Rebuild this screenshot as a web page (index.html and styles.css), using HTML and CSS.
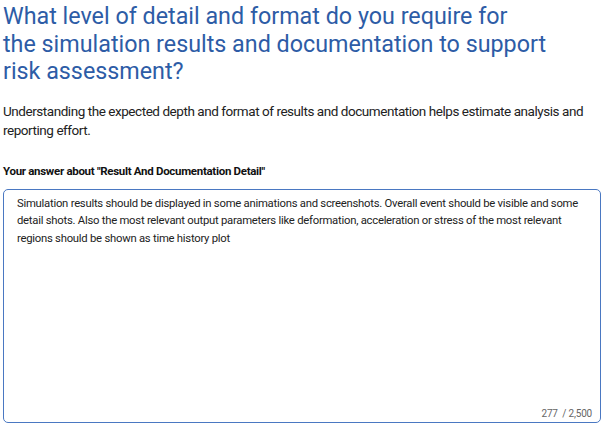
FILE: index.html
```html
<!doctype html>
<html>
<head>
<meta charset="utf-8">
<title>Result And Documentation Detail</title>
<link rel="stylesheet" href="styles.css">
</head>
<body>
<div class="question">
    <h1 class="questionTitle">What level of detail and format do you require for<br>the simulation results and documentation to support<br>risk assessment?</h1>
    <p class="questionHint">Understanding the expected depth and format of results and documentation helps estimate analysis and reporting effort.</p>
    <div class="answerLabel">Your answer about "Result And Documentation Detail"</div>
    <div class="answerBox">
        <div class="answerText">Simulation results should be displayed in some animations and screenshots. Overall event should be visible and some detail shots. Also the most relevant output parameters like deformation, acceleration or stress of the most relevant regions should be shown as time history plot</div>
        <div class="counter">277&nbsp; / 2,500</div>
    </div>
</div>
</body>
</html>
```

FILE: styles.css
```css
body{
    margin: 0;
    font-family: Roboto, "Liberation Sans", sans-serif;
    background-color: #FFFFFF;
}
.question{
    padding: 0 4px 0 3px;
}
.questionTitle{
    margin: 0;
    padding-top: 3px;
    font-size: 23.3px;
    line-height: 27.5px;
    font-weight: 400;
    color: #2D5CA6;
}
.questionHint{
    margin: 16px 0 0 0;
    font-size: 13.5px;
    letter-spacing: -0.45px;
    line-height: 19px;
    color: #222222;
}
.answerLabel{
    margin-top: 24px;
    font-size: 11.5px;
    letter-spacing: -0.3px;
    font-weight: 700;
    color: #111111;
}
.answerBox{
    margin-top: 11px;
    height: 234px;
    border: 1px solid #4A78C2;
    border-radius: 5px;
    display: flex;
    flex-direction: column;
    justify-content: space-between;
    padding: 5px 8px 3px 13px;
    box-sizing: border-box;
}
.answerText{
    font-size: 11.3px;
    letter-spacing: -0.25px;
    line-height: 17.5px;
    color: #222222;
}
.counter{
    align-self: flex-end;
    font-size: 10px;
    letter-spacing: -0.2px;
    color: #666666;
}
```
